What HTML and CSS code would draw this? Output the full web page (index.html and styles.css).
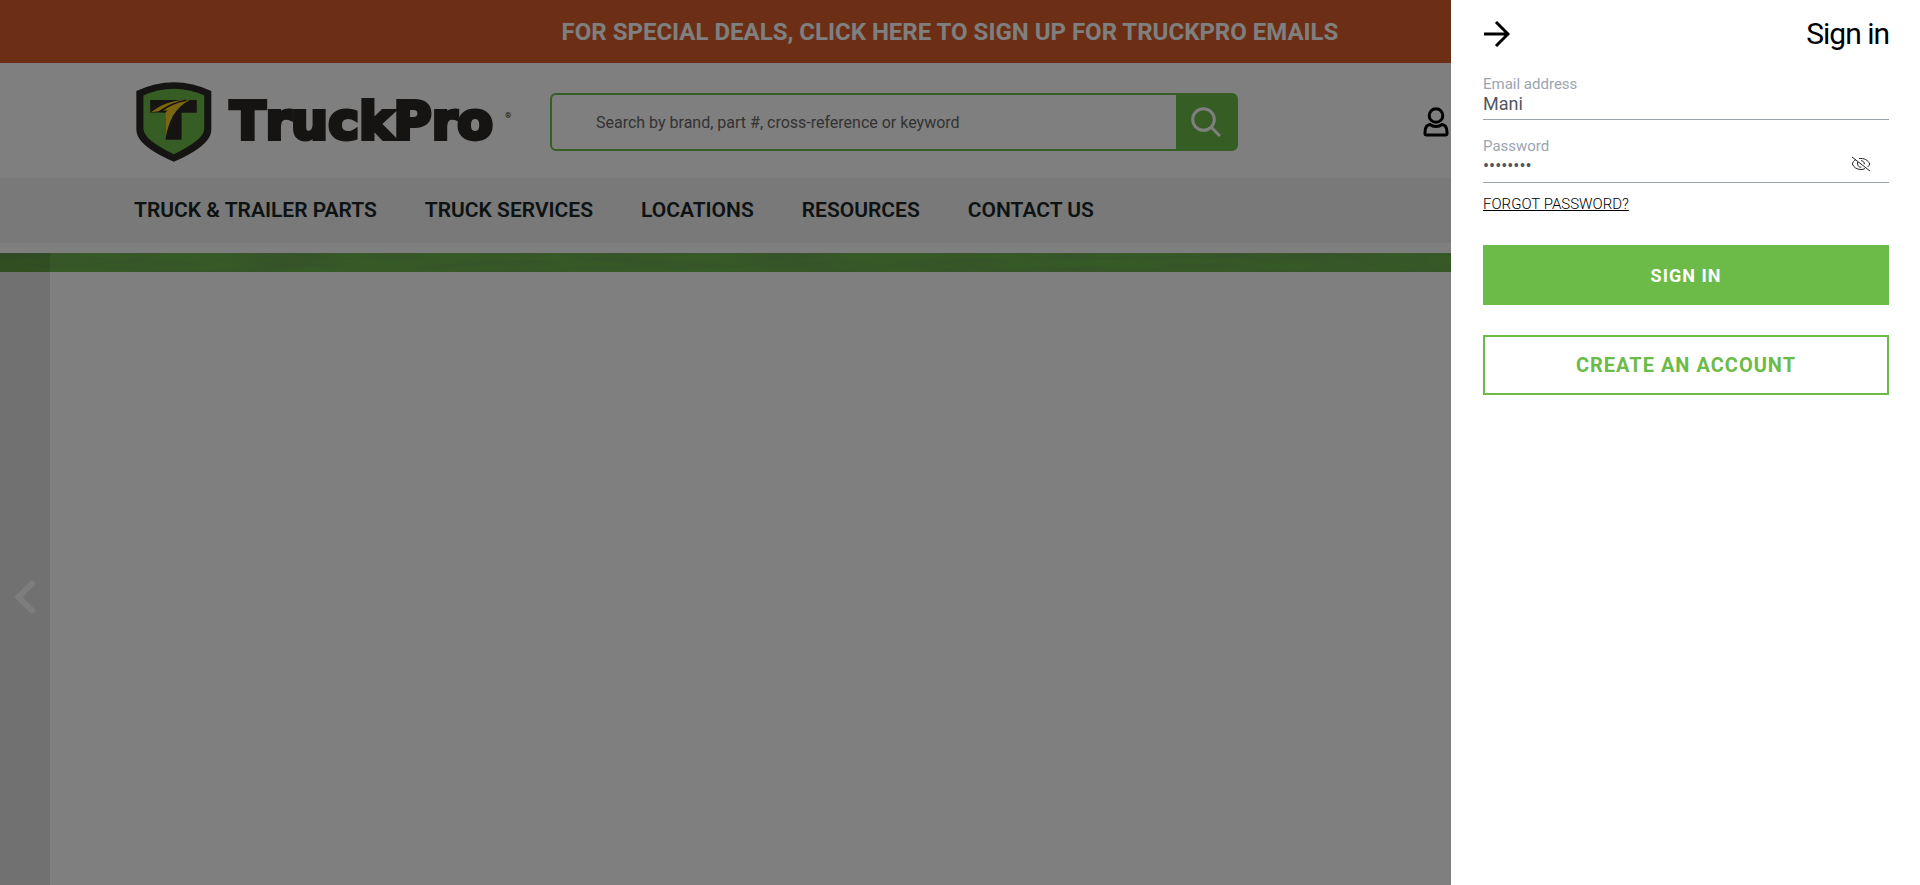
FILE: index.html
```html
<!DOCTYPE html>
<html lang="en">
<head>
<meta charset="utf-8">
<title>TruckPro</title>
<link rel="stylesheet" href="styles.css">
</head>
<body>
<div class="page">
  <a class="promo" href="#">FOR SPECIAL DEALS, CLICK HERE TO SIGN UP FOR TRUCKPRO EMAILS</a>
  <header class="header">
    <a class="logo" href="#" aria-label="TruckPro home">
      <svg class="logo-shield" viewBox="0 0 225 237" aria-hidden="true">
        <path fill="#2d2924" d="M1 27Q56 1 112 1Q168 1 223 27V140C223 175 185 204 112 236C39 204 1 175 1 140Z"/>
        <path fill="#6cbb49" d="M22 40Q66 20 112 20Q158 20 202 40V138C202 162 170 186 112 214C54 186 22 162 22 138Z"/>
        <path fill="#2d2924" d="M42 53H180V91H42Z"/>
        <path fill="#2d2924" d="M87 88H135V171H87Z"/>
        <path fill="#6cbb49" d="M44 91C58 91 76 88 88 94L87 104H60Z"/>
        <path fill="#f2cc1d" d="M44 90C66 71 101 54 146 53C110 62 85 74 68 87Z"/>
        <path fill="#f2cc1d" d="M78 84C97 67 122 56 150 53C129 61 113 72 99 86Z"/>
        <path fill="#f2cc1d" d="M87 171V91C108 68 131 55 160 53C115 75 96 115 87 171Z"/>
        <path fill="none" stroke="#2d2924" stroke-width="5" d="M69 89C95 70 119 59 148 54"/>
      </svg>
      <svg class="logo-name" viewBox="0 0 283 52" aria-hidden="true">
        <text class="logo-word" x="2" y="43">TruckPro</text>
        <text class="logo-mark" x="277" y="22">®</text>
      </svg>
    </a>
    <form class="search" role="search">
      <input class="search-input" type="search" aria-label="Search" placeholder="Search by brand, part #, cross-reference or keyword">
      <button class="search-button" type="button" aria-label="Search">
        <svg class="search-icon" viewBox="0 0 30 30" aria-hidden="true"><circle cx="12.500" cy="12.500" r="10.800"/><path d="M20 20L29 29"/></svg>
      </button>
    </form>
    <a class="account" href="#" aria-label="Account">
      <svg class="account-icon" viewBox="0 0 26 30" aria-hidden="true"><circle cx="13" cy="8.500" r="6.800"/><path d="M7 17.500C3.500 18 2 21 2 25V26.500Q2 28 3.500 28H22.500Q24 28 24 26.500V25C24 21 22.500 18 19 17.500C16 20 10 20 7 17.500Z"/></svg>
    </a>
  </header>
  <nav class="nav">
    <a class="nav-link" href="#">TRUCK &amp; TRAILER PARTS</a>
    <a class="nav-link" href="#">TRUCK SERVICES</a>
    <a class="nav-link" href="#">LOCATIONS</a>
    <a class="nav-link" href="#">RESOURCES</a>
    <a class="nav-link" href="#">CONTACT US</a>
  </nav>
  <main class="carousel">
    <svg class="carousel-strip" aria-hidden="true">
      <filter id="grain" x="0" y="0" width="100%" height="100%"><feTurbulence type="fractalNoise" baseFrequency="0.012 0.14" numOctaves="4" seed="4"/><feColorMatrix values="0 0 0 0 0.15  0 0 0 0 0.35  0 0 0 0 0.1  1.600 0 0 0 -0.550"/></filter>
      <rect width="100%" height="100%" fill="#6cb44b"/>
      <rect width="100%" height="100%" filter="url(#grain)"/>
    </svg>
    <button class="carousel-prev" type="button" aria-label="Previous slide">
      <svg class="carousel-chevron" viewBox="0 0 22 34" aria-hidden="true"><path d="M18 3.500L4.500 17L18 30.500"/></svg>
    </button>
  </main>
</div>
<div class="backdrop"></div>
<aside class="drawer" aria-label="Sign in">
  <div class="drawer-head">
    <button class="drawer-close" type="button" aria-label="Close">
      <svg class="drawer-arrow" viewBox="0 0 27 26" aria-hidden="true"><path d="M1 13H26M13 1L25 13L13 25"/></svg>
    </button>
    <h1 class="drawer-title">Sign in</h1>
  </div>
  <form class="form">
    <div class="field">
      <label class="label" for="email">Email address</label>
      <input class="input" id="email" type="text" value="Mani">
    </div>
    <div class="field">
      <label class="label" for="password">Password</label>
      <div class="password-row">
        <input class="input input-password" id="password" type="password" value="password">
        <button class="reveal" type="button" aria-label="Show password">
          <svg class="reveal-icon" viewBox="0 0 20 16" aria-hidden="true"><path d="M1 1L19 15M5 3.500C3 4.500 1.800 6.500 1.300 8C2.700 11.500 6 13.500 10 13.500C11.500 13.500 12.800 13.200 14 12.600M8 2.600C13 1.800 17.300 4.300 18.700 8C18.300 9.200 17.600 10.200 16.600 11M6.800 6C5.800 8.800 7.500 11.300 10.300 11.200M10 4.700C12.300 4.700 13.500 6.400 13.300 8.300"/></svg>
        </button>
      </div>
    </div>
    <a class="forgot" href="#">FORGOT PASSWORD?</a>
    <button class="button button-primary" type="button">SIGN IN</button>
    <button class="button button-outline" type="button">CREATE AN ACCOUNT</button>
  </form>
</aside>
</body>
</html>
```

FILE: styles.css
```css
* { box-sizing: border-box; }
html { height: 100%; }
body { margin: 0; height: 100%; background: #fff; font-family: Roboto, "Liberation Sans", sans-serif; }
a { color: inherit; text-decoration: none; }
button, input { font-family: inherit; }
button { border: 0; padding: 0; background: none; cursor: pointer; }
svg { display: block; }

.page { display: flex; flex-direction: column; height: 100%; overflow: hidden; }
.promo { padding: 17px 20px 16px 0; background: #d85e2c; color: #fff; font-size: 24px; line-height: 30px; font-weight: 700; text-align: center; }

.header { display: flex; align-items: center; padding: 18px 0 15px 136px; }
.logo { display: flex; align-items: center; gap: 16px; margin-right: 39px; }
.logo-shield { width: 76px; height: 82px; }
.logo-name { width: 283px; height: 52px; overflow: visible; }
.logo-word { font: 700 52px "DejaVu Sans", sans-serif; font-kerning: none; fill: #2d2924; stroke: #2d2924; stroke-width: 4px; }
.logo-mark { font: 700 8px Roboto, sans-serif; fill: #2d2924; }

.search { display: flex; width: 688px; height: 58px; border: 2px solid #6cbb49; border-radius: 6px; background: #6cbb49; }
.search-input { flex: 1; min-width: 0; padding: 0 44px; border: 0; border-radius: 4px 0 0 4px; background: #fff; font-size: 16px; }
.search-input::placeholder { color: #666; }
.search-button { display: grid; place-items: center; width: 60px; }
.search-icon { width: 30px; height: 30px; fill: none; stroke: #fff; stroke-width: 3px; }
.account { margin-left: 185px; }
.account-icon { width: 26px; height: 30px; fill: none; stroke: #000; stroke-width: 3px; }

.nav { display: flex; align-items: center; gap: 48px; padding: 20px 0 21px 134px; background: #f2f2f2; }
.nav-link { color: #1b2626; font-size: 21px; line-height: 24px; font-weight: 600; }

.carousel { position: relative; flex: none; margin-top: 10px; aspect-ratio: 1920 / 687; }
.carousel-strip { width: 100%; height: 19px; }
.carousel-prev { position: absolute; inset: 0 auto 0 0; display: grid; place-items: center; width: 50px; background: rgb(0 0 0 / 11%); }
.carousel-chevron { width: 22px; height: 34px; fill: none; stroke: #fbfbfb; stroke-width: 6px; stroke-linecap: round; }

.backdrop { position: fixed; inset: 0; background: rgb(0 0 0 / 50%); }
.drawer { position: fixed; inset: 0 0 0 auto; width: 469px; padding: 14px 31px 0 32px; background: #fff; }
.drawer-head { display: flex; align-items: center; justify-content: space-between; }
.drawer-arrow { width: 27px; height: 26px; fill: none; stroke: #000; stroke-width: 3px; }
.drawer-title { margin: 0; font-size: 30px; line-height: 40px; font-weight: 400; letter-spacing: -1px; }
.form { display: flex; flex-direction: column; margin-top: 20px; }
.field { display: flex; flex-direction: column; margin-bottom: 16px; }
.label { color: #9aa5b1; font-size: 15px; line-height: 20px; }
.input { width: 100%; height: 26px; padding: 0 0 6px; border: 0; border-bottom: 1px solid #98a1ac; background: transparent; color: #52575f; font-size: 18px; }
.password-row { position: relative; }
.input-password { display: block; height: 27px; padding-bottom: 8px; }
.reveal { position: absolute; right: 18px; top: 0; }
.reveal-icon { width: 20px; height: 16px; fill: none; stroke: #222; stroke-width: 1px; }
.forgot { align-self: flex-start; margin-top: -5px; color: #000; font-size: 15px; line-height: 20px; font-weight: 300; text-decoration: underline; }
.button { height: 60px; font-size: 18px; font-weight: 700; letter-spacing: 1px; }
.button-primary { margin-top: 31px; background: #6cbb49; color: #fff; }
.button-outline { margin-top: 30px; border: 2px solid #6cbb49; color: #6cbb49; font-size: 20px; }
```
